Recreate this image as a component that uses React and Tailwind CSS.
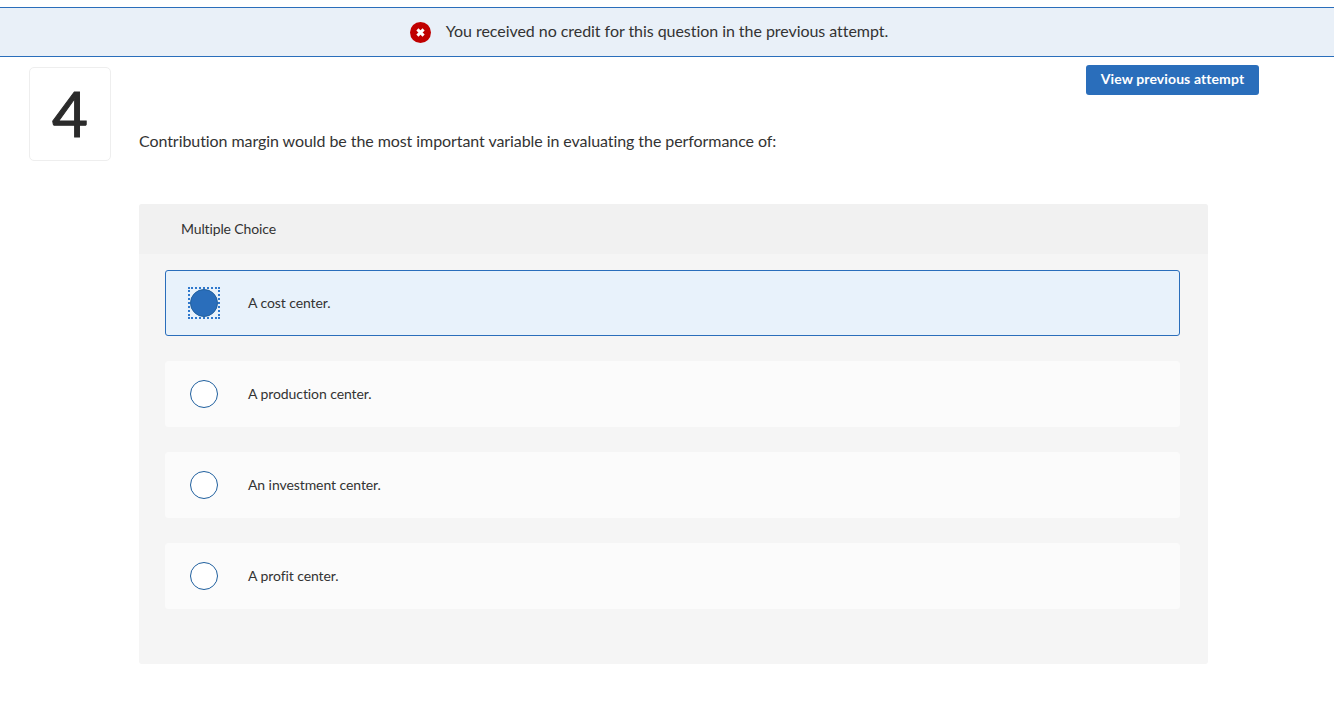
function Option({ text, selected }) {
  return (
    <div className={selected
      ? "flex h-[66px] items-center rounded-[3px] border border-[#2a6ebb] bg-[#e8f2fb] pl-[24px]"
      : "flex h-[66px] items-center rounded-[3px] border border-[#fbfbfb] bg-[#fbfbfb] pl-[24px]"}>
      {selected ? (
        <div className="-ml-[2px] mr-[-2px] flex h-[32px] w-[32px] shrink-0 items-center justify-center border-2 border-dotted border-[#2f78cc]">
          <div className="h-[28px] w-[28px] shrink-0 rounded-full border border-[#1f5f9e] bg-[#2a6ebb]" />
        </div>
      ) : (
        <div className="h-[28px] w-[28px] shrink-0 rounded-full border border-[#1f5f9e] bg-white" />
      )}
      <span className="ml-[30px] pb-[1px] text-[14px] tracking-[-0.08px] text-[#333333]">{text}</span>
    </div>
  );
}
export default function App() {
  return (
    <div className="relative h-[715px] w-[1334px] overflow-hidden bg-white font-['Lato',sans-serif] text-[#333333]">
      <div className="mt-[7px] flex h-[50px] items-center justify-center border-y border-y-[#2a6ebb] bg-[#e9f0f8] pr-[36px]">
        <svg width="21" height="21" viewBox="0 0 21 21" className="mr-[15px]">
          <circle cx="10.5" cy="10.5" r="10.5" fill="#c00000" />
          <path d="M7.4 7.4l6.2 6.2M13.6 7.4l-6.2 6.2" stroke="#fff" strokeWidth="3" />
        </svg>
        <span className="pb-[2px] text-[16px] tracking-[-0.05px]">You received no credit for this question in the previous attempt.</span>
      </div>
      <div className="flex">
        <div className="ml-[29px] mt-[10px] flex h-[94px] w-[82px] items-center justify-center rounded-[5px] border border-[#eeeeee]">
          <span className="pb-[3px] text-[62px] leading-none text-[#2b2b2b] [-webkit-text-stroke:1px_#2b2b2b]">4</span>
        </div>
        <div className="ml-[28px] w-[1069px]">
          <div className="flex justify-end">
            <button className="mr-[-51px] mt-[8px] h-[30px] w-[173px] rounded-[3px] bg-[#2a6ebb] pb-[3px] text-[14px] font-bold tracking-[0.1px] text-white">View previous attempt</button>
          </div>
          <p className="mt-[35px] text-[16px] leading-[22px] tracking-[-0.07px]">Contribution margin would be the most important variable in evaluating the performance of:</p>
          <div className="mt-[52px] h-[460px] rounded-[3px] bg-[#f5f5f5]">
            <div className="flex h-[50px] items-center rounded-t-[3px] bg-[#f1f1f1] pb-[1px] pl-[42px] text-[14px] tracking-[-0.13px]">Multiple Choice</div>
            <div className="flex flex-col gap-[25px] pl-[26px] pr-[28px] pt-[16px]">
              <Option text="A cost center." selected />
              <Option text="A production center." />
              <Option text="An investment center." />
              <Option text="A profit center." />
            </div>
          </div>
        </div>
      </div>
    </div>
  );
}
